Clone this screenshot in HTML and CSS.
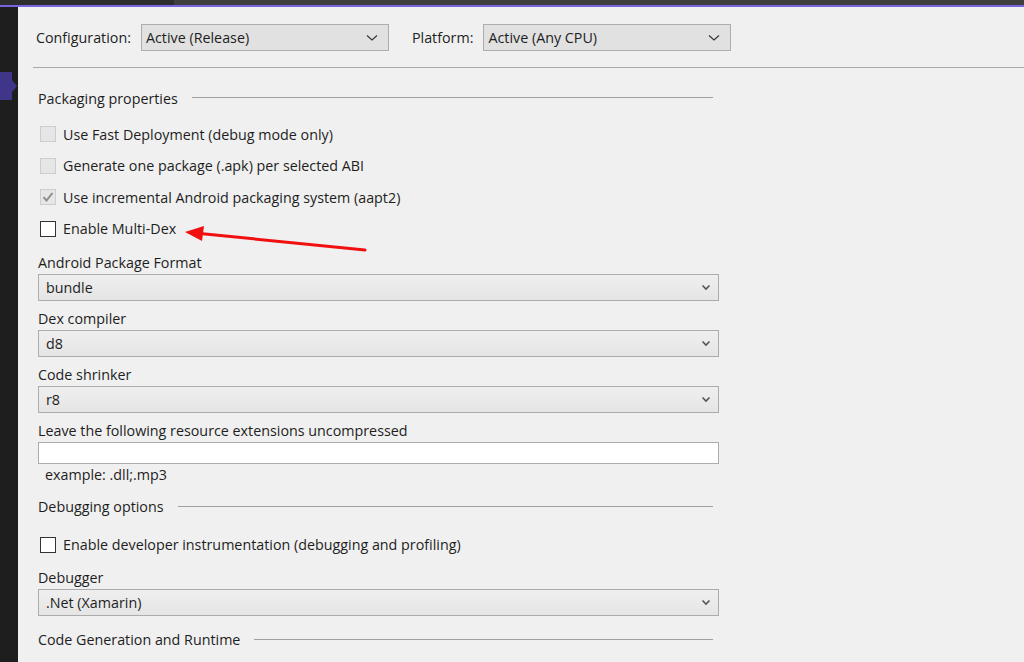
FILE: index.html
```html
<!DOCTYPE html>
<html>
<head>
<meta charset="utf-8">
<link rel="stylesheet" href="styles.css">
</head>
<body>
<div class="topbar"><div class="tb-left"></div><div class="tb-right"></div></div>
<div class="main">
  <div class="strip"><div class="tab"></div></div>
  <div class="content">
    <div class="configrow">
      <span class="lbl">Configuration:</span>
      <div class="combo top"><span>Active (Release)</span><svg class="chev" width="12" height="8" viewBox="0 0 12 8"><path d="M1 1.5 L6 6 L11 1.5" fill="none" stroke="#333" stroke-width="1.1"/></svg></div>
      <span class="lbl plat">Platform:</span>
      <div class="combo top"><span>Active (Any CPU)</span><svg class="chev" width="12" height="8" viewBox="0 0 12 8"><path d="M1 1.5 L6 6 L11 1.5" fill="none" stroke="#333" stroke-width="1.1"/></svg></div>
    </div>
    <div class="rule"></div>
    <div class="form">
      <div class="section"><span>Packaging properties</span><div class="sline"></div></div>
      <div class="checks">
        <div class="chk"><span class="box dis"></span><span>Use Fast Deployment (debug mode only)</span></div>
        <div class="chk"><span class="box dis"></span><span>Generate one package (.apk) per selected ABI</span></div>
        <div class="chk"><span class="box dis"><svg width="14" height="14" viewBox="0 0 14 14"><path d="M2.5 7.2 L5.5 10.5 L11.5 3" fill="none" stroke="#8c8c8c" stroke-width="2"/></svg></span><span>Use incremental Android packaging system (aapt2)</span></div>
        <div class="chk"><span class="box"></span><span>Enable Multi-Dex</span></div>
      </div>
      <div class="field f1">
        <div class="flabel">Android Package Format</div>
        <div class="combo wide"><span>bundle</span><svg class="chev" width="10" height="7" viewBox="0 0 10 7"><path d="M1.5 1.5 L5 5 L8.5 1.5" fill="none" stroke="#555" stroke-width="1.6"/></svg></div>
      </div>
      <div class="field">
        <div class="flabel">Dex compiler</div>
        <div class="combo wide"><span>d8</span><svg class="chev" width="10" height="7" viewBox="0 0 10 7"><path d="M1.5 1.5 L5 5 L8.5 1.5" fill="none" stroke="#555" stroke-width="1.6"/></svg></div>
      </div>
      <div class="field">
        <div class="flabel">Code shrinker</div>
        <div class="combo wide"><span>r8</span><svg class="chev" width="10" height="7" viewBox="0 0 10 7"><path d="M1.5 1.5 L5 5 L8.5 1.5" fill="none" stroke="#555" stroke-width="1.6"/></svg></div>
      </div>
      <div class="field">
        <div class="flabel">Leave the following resource extensions uncompressed</div>
        <div class="textbox"></div>
        <div class="hint">example: .dll;.mp3</div>
      </div>
      <div class="section sec2"><span>Debugging options</span><div class="sline"></div></div>
      <div class="chk single"><span class="box"></span><span>Enable developer instrumentation (debugging and profiling)</span></div>
      <div class="field f2">
        <div class="flabel">Debugger</div>
        <div class="combo wide"><span>.Net (Xamarin)</span><svg class="chev" width="10" height="7" viewBox="0 0 10 7"><path d="M1.5 1.5 L5 5 L8.5 1.5" fill="none" stroke="#555" stroke-width="1.6"/></svg></div>
      </div>
      <div class="section sec3"><span>Code Generation and Runtime</span><div class="sline"></div></div>
    </div>
  </div>
</div>
<svg class="arrow" width="1024" height="662" viewBox="0 0 1024 662">
  <path d="M365 250 L200 233.5" stroke="#f01010" stroke-width="3" fill="none" stroke-linecap="round"/>
  <path d="M185 232 L204 226 L202 241 Z" fill="#f01010"/>
</svg>
</body>
</html>
```
FILE: styles.css
```css
* { box-sizing: border-box; }
html, body { margin: 0; padding: 0; }
body {
  width: 1024px; height: 662px; overflow: hidden;
  background: #f0f0f0;
  font-family: "Open Sans", "Noto Sans", sans-serif;
  font-size: 14.3px; color: #1e1e1e;
  position: relative;
}
.topbar { height: 7px; display: flex; border-bottom: 2px solid #7565e0; }
.tb-left { width: 174px; background: #2d2d2d; }
.tb-right { flex: 1; background: #3e3e3e; }
.main { display: flex; height: 655px; }
.strip { width: 18px; background: #1e1e1e; position: relative; flex: none; }
.tab {
  position: absolute; left: 0; top: 65px; width: 17px; height: 28px;
  background: #3f3689;
  clip-path: polygon(0 0, 12px 0, 12px 8px, 17px 14px, 12px 20px, 12px 28px, 0 28px);
}
.content { flex: 1; padding: 17px 0 0 15px; }
.configrow { display: flex; align-items: center; height: 27px; padding-left: 3px; }
.lbl { margin-right: 10px; }
.plat { margin-left: 23px; }
.combo {
  display: flex; align-items: center; justify-content: space-between;
  border: 1px solid #adadad; background: #e1e1e1; height: 27px;
  padding: 0 10px 0 4px;
}
.combo.top { width: 248px; }
.rule { height: 1px; background: #a8a8a8; margin-top: 16px; }
.form { padding-left: 5px; width: 701px; }
.section { display: flex; align-items: center; margin-top: 20px; height: 20px; width: 675px; }
.section .sline { flex: 1; height: 1px; background: #a0a0a0; margin-left: 14px; margin-top: -1px; }
.checks { margin-top: 16.5px; display: flex; flex-direction: column; gap: 12.5px; }
.chk { display: flex; align-items: center; height: 19px; padding-left: 2px; }
.box {
  width: 16px; height: 16px; border: 1px solid #333; background: #fff;
  margin-right: 7px; flex: none; display: flex; align-items: center; justify-content: center;
}
.box.dis { border-color: #cdcdcd; background: #e6e6e6; }
.field { margin-top: 9px; }
.field.f1 { margin-top: 15.5px; }
.flabel { height: 18px; line-height: 18px; margin-bottom: 2px; }
.combo.wide {
  width: 681px; padding: 0 7px 0 7px;
  background: linear-gradient(#efefef, #e5e5e5); border-color: #acacac;
}
.textbox { width: 681px; height: 22px; background: #fff; border: 1px solid #acacac; margin-top: 1px; }
.hint { padding-left: 7px; margin-top: 1px; height: 20px; line-height: 20px; }
.sec2 { margin-top: 12px; }
.single { margin-top: 18.5px; }
.field.f2 { margin-top: 14.5px; }
.sec3 { margin-top: 14px; }
.arrow { position: absolute; left: 0; top: 0; pointer-events: none; }
```
